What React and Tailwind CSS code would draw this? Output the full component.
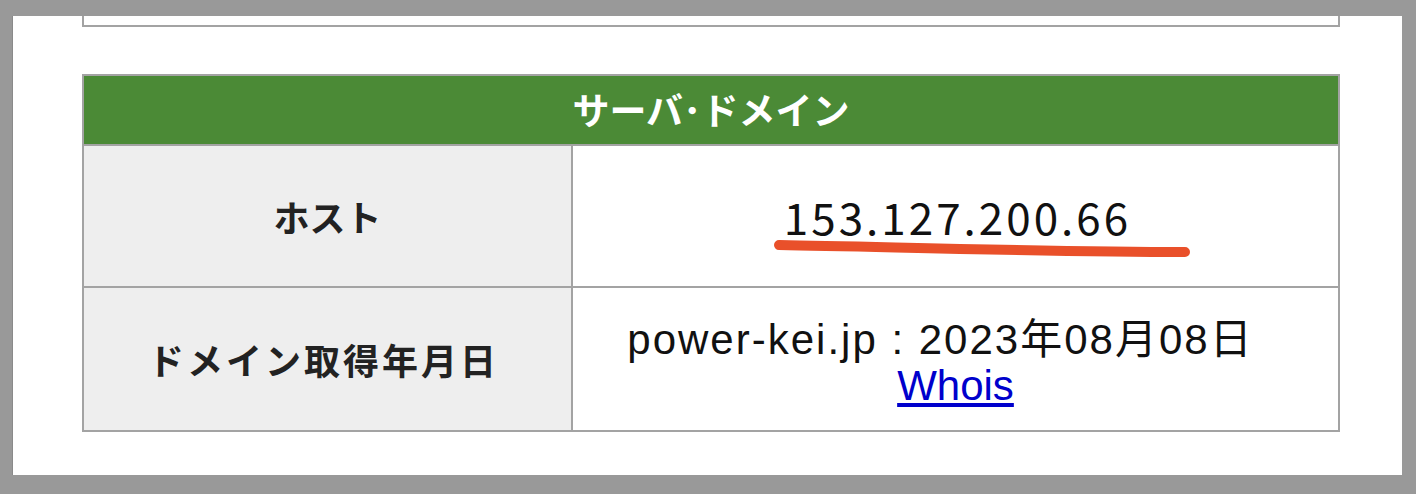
import React from 'react';

const jp = { fontFamily: '"Noto Sans CJK JP", sans-serif' };
const latin = { fontFamily: '"Liberation Sans", "Noto Sans CJK JP", sans-serif' };

export default function App() {
  return (
    <div className="w-[1416px] h-[494px] bg-[#999999] pt-4 pl-3 pr-[14px] pb-[19px]">
      <div className="h-full bg-white border-l border-[#8a8a8a] pl-[69px]">
        {/* bottom edge of the table above */}
        <div className="w-[1258px] h-[11px] border-x-2 border-b-2 border-[#a3a3a3]" />

        <div className="w-[1258px] mt-[47px] border-2 border-[#a3a3a3]" style={jp}>
          <div className="h-[70px] bg-[#4b8a36] flex items-center justify-center text-white font-bold text-[37px] border-b-2 border-[#a3a3a3]">
            サーバ･ドメイン
          </div>

          <div className="grid grid-cols-[489px_1fr] h-[142px] border-b-2 border-[#a3a3a3]">
            <div className="bg-[#eeeeee] border-r-2 border-[#a3a3a3] flex items-center justify-center text-[36px] font-bold text-[#222]">
              ホスト
            </div>
            <div className="flex items-center justify-center">
              <div className="relative ml-1">
                <span className="block text-[44px] text-[#111] tracking-[3px] leading-none">153.127.200.66</span>
                <svg className="absolute left-[-11px] top-[44px]" width="424" height="24" viewBox="0 0 424 24">
                  <path d="M6 7 C 120 9, 280 14, 412 14" stroke="#e9502a" strokeWidth="10" strokeLinecap="round" fill="none" />
                </svg>
              </div>
            </div>
          </div>

          <div className="grid grid-cols-[489px_1fr] h-[142px]">
            <div className="bg-[#eeeeee] border-r-2 border-[#a3a3a3] flex items-center justify-center text-[36px] font-bold text-[#222] tracking-[3px] pr-2">
              ドメイン取得年月日
            </div>
            <div className="flex flex-col items-center justify-center text-[42px] leading-[46px] text-[#111] pt-1">
              <div className="pr-[30px] tracking-[2px]">
                <span style={latin}>power-kei.jp : 2023</span>年
                <span style={latin}>08</span>月
                <span style={latin}>08</span>日
              </div>
              <a href="#" className="text-[#0000cc] underline" style={latin}>
                Whois
              </a>
            </div>
          </div>
        </div>
      </div>
    </div>
  );
}
